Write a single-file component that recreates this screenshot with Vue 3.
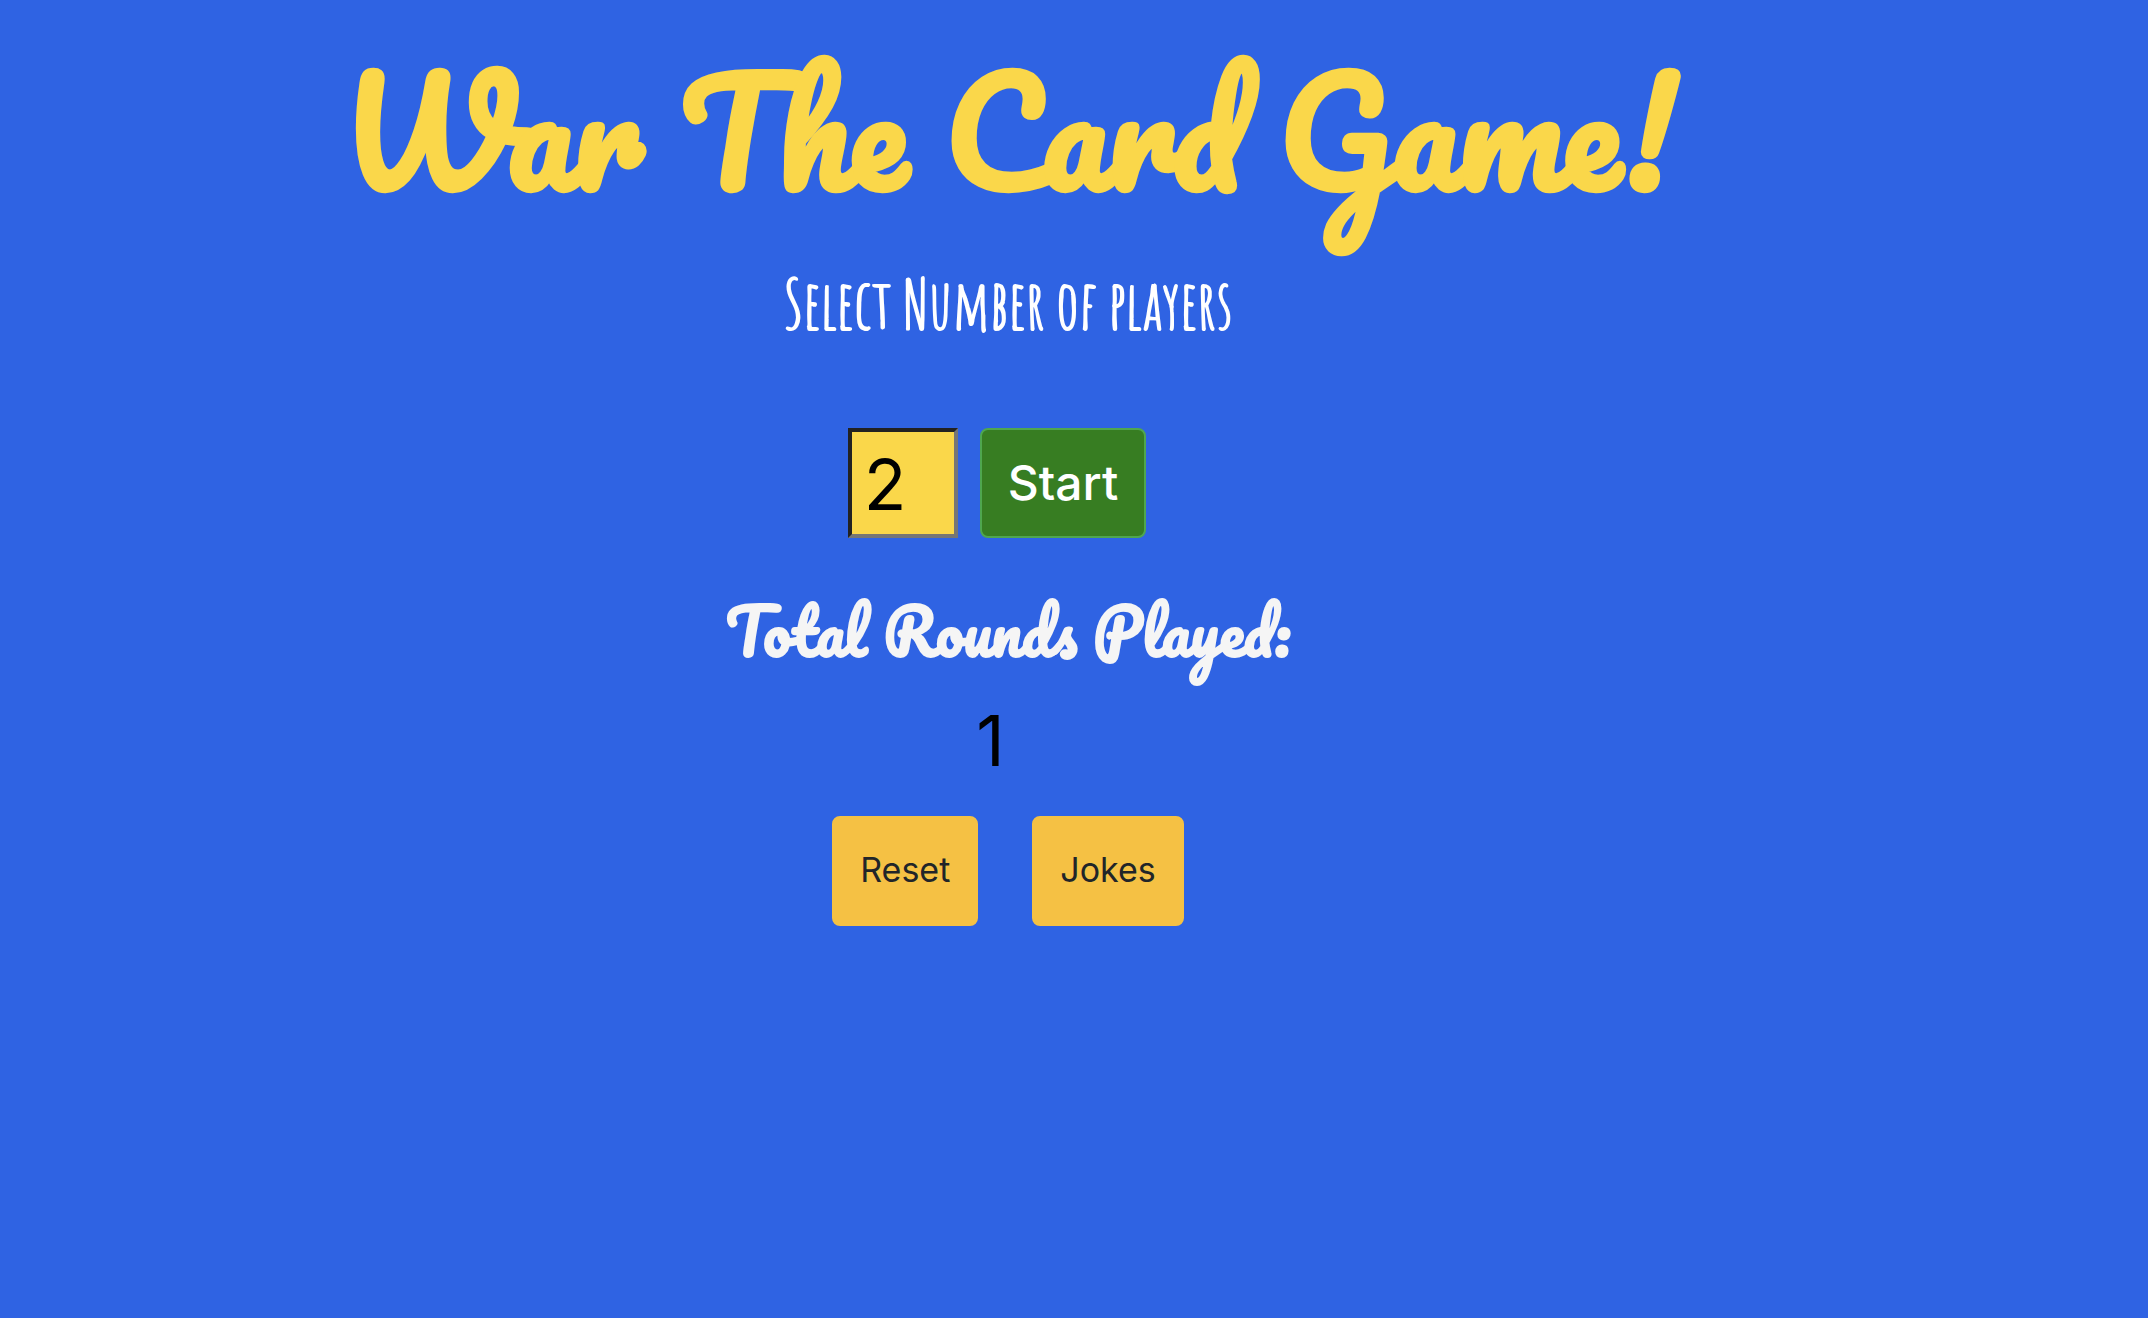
<script setup>
import { ref } from 'vue'

const players = ref(2)
const rounds = ref(1)
</script>

<template>
  <main class="game">
    <h1 class="title">War The Card Game!</h1>
    <label class="prompt" for="players">Select Number of players</label>
    <form class="setup" @submit.prevent>
      <input id="players" v-model="players" class="players" type="number" />
      <button class="btn start" type="submit">Start</button>
    </form>
    <label class="rounds-label" for="rounds">Total Rounds Played:</label>
    <input id="rounds" v-model="rounds" class="rounds" type="number" />
    <div class="actions">
      <button class="btn warning" type="button">Reset</button>
      <button class="btn warning" type="button">Jokes</button>
    </div>
  </main>
</template>

<style>
body {
  margin: 0;
  background: #2f63e3;
}
</style>

<style scoped>
.game {
  display: flex;
  flex-direction: column;
  align-items: center;
  padding: 30px 132px 40px 0;
  font-family: Inter, "Liberation Sans", sans-serif;
}

.title {
  margin: 0;
  color: #fad74a;
  font-family: Pacifico, Lato, sans-serif;
  font-size: 141px;
  font-weight: 700;
  line-height: 200px;
  white-space: nowrap;
}

.prompt {
  margin-top: 26px;
  color: #fff;
  font-family: "Amatic SC", "Liberation Sans", sans-serif;
  font-size: 66px;
  font-weight: 400;
  line-height: 96px;
  -webkit-text-stroke: 2px #fff;
}

.setup {
  display: flex;
  gap: 22px;
  margin-top: 76px;
  padding-right: 22px;
}

.players,
.rounds {
  box-sizing: border-box;
  height: 110px;
  color: #000;
  font-family: inherit;
  font-size: 70px;
}

.players {
  width: 110px;
  padding: 2px 0 0 12px;
  border: 4px solid;
  border-color: #222 #767676 #767676 #222;
  border-radius: 0;
  background: #fad74a;
}

.rounds {
  width: 220px;
  margin-top: 4px;
  padding: 4px 24px 2px 4px;
  border: 0;
  background: transparent;
  text-align: center;
}

.btn {
  box-sizing: border-box;
  height: 110px;
  padding: 0 26px 2px;
  border: 2px solid;
  border-radius: 8px;
  font-family: inherit;
}

.start {
  border-color: #4fa64f;
  background: #377d22;
  color: #fff;
  font-size: 48px;
  font-weight: 500;
}

.rounds-label {
  margin-top: 46px;
  color: #f5f5f5;
  font-family: Pacifico, Lato, sans-serif;
  font-size: 61px;
  font-weight: 700;
  line-height: 96px;
}

.actions {
  display: flex;
  gap: 54px;
  margin-top: 22px;
}

.warning {
  padding-bottom: 4px;
  border-color: #f5c144;
  background: #f5c144;
  color: #212529;
  font-size: 34px;
}
</style>
